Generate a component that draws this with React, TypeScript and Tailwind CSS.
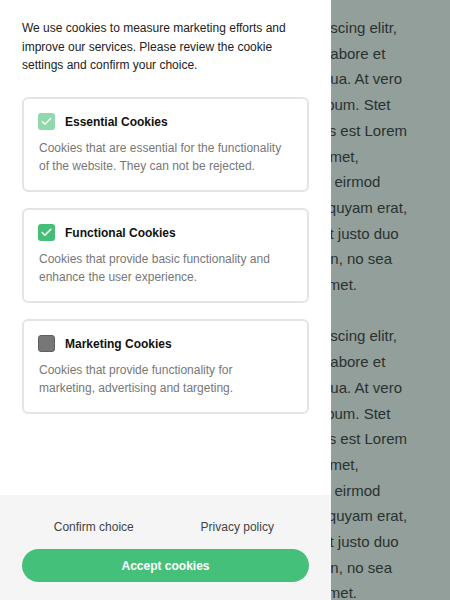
import { Check } from 'lucide-react'

const LINES = [
  'Lorem ipsum dolor sit amet, consetetur sadipscing elitr,',
  'sed diam nonumy eirmod tempor invidunt ut labore et',
  'dolore magna aliquyam erat, sed diam voluptua. At vero',
  'eos et accusam et justo duo dolores et ea rebum. Stet',
  'clita kasd gubergren, no sea takimata sanctus est Lorem',
  'ipsum dolor sit amet. Lorem ipsum dolor sit amet,',
  'consetetur sadipscing elitr, sed diam nonumy eirmod',
  'tempor invidunt ut labore et dolore magna aliquyam erat,',
  'sed diam voluptua. At vero eos et accusam et justo duo',
  'dolores et ea rebum. Stet clita kasd gubergren, no sea',
  'takimata sanctus est Lorem ipsum dolor sit amet.',
]

const categories = [
  {
    title: 'Essential Cookies',
    text: 'Cookies that are essential for the functionality of the website. They can not be rejected.',
    state: 'locked' as const,
  },
  {
    title: 'Functional Cookies',
    text: 'Cookies that provide basic functionality and enhance the user experience.',
    state: 'on' as const,
  },
  {
    title: 'Marketing Cookies',
    text: 'Cookies that provide functionality for marketing, advertising and targeting.',
    state: 'off' as const,
  },
]

function Box({ state }: { state: 'locked' | 'on' | 'off' }) {
  if (state === 'off') {
    return <span className="h-[17px] w-[17px] shrink-0 rounded-[3px] border border-[#5f5f5f] bg-[#777777]" />
  }
  return (
    <span
      className={
        'flex h-[17px] w-[17px] shrink-0 items-center justify-center rounded-[3px] ' +
        (state === 'on' ? 'bg-[#44bf78]' : 'bg-[#90d8ad]')
      }
    >
      <Check size={13} strokeWidth={state === 'on' ? 3 : 2.2} className="text-white" />
    </span>
  )
}

export default function App() {
  return (
    <div className="flex h-[600px] w-[450px] overflow-hidden bg-[#929f9b] font-['Liberation_Sans',Arial,sans-serif]">
      {/* cookie panel */}
      <aside className="flex h-full w-[331px] shrink-0 flex-col bg-white">
        <div className="px-[22px] pt-[19px]">
          <p className="text-[12px] leading-[18.5px] text-[#222222]">
            We use cookies to measure marketing efforts and improve our services. Please review the cookie settings and
            confirm your choice.
          </p>
          <div className="mt-[22px] flex flex-col gap-[16px]">
            {categories.map((c) => (
              <div key={c.title} className="rounded-[6px] border-2 border-[#e4e4e4] px-[14px] pb-[14px] pt-[14px]">
                <div className="flex items-center gap-[10px]">
                  <Box state={c.state} />
                  <span className="text-[12px] font-bold text-[#111111]">{c.title}</span>
                </div>
                <p className="mt-[8px] max-w-[248px] pl-px text-[12px] leading-[18.5px] text-[#777777]">{c.text}</p>
              </div>
            ))}
          </div>
        </div>

        <footer className="mt-auto bg-[#f5f5f5] px-[22px] pb-[18px] pt-[23px]">
          <div className="grid grid-cols-2 text-center text-[12px] leading-[19px] text-[#444444]">
            <span>Confirm choice</span>
            <span>Privacy policy</span>
          </div>
          <button className="mt-[12px] flex h-[33px] w-full items-center justify-center rounded-full bg-[#45c07a] text-[12px] font-bold text-white">
            Accept cookies
          </button>
        </footer>
      </aside>

      {/* dimmed page, partly covered by the panel */}
      <div className="min-w-0 flex-1 overflow-hidden">
        <div className="-ml-[300px] pt-[15px] text-[15px] leading-[25.7px] text-[#29322f]">
          {[0, 1].map((p) => (
            <div key={p} className="mb-[25.7px]">
              {LINES.map((l) => (
                <div key={l} className="whitespace-nowrap">
                  {l}
                </div>
              ))}
            </div>
          ))}
        </div>
      </div>
    </div>
  )
}
